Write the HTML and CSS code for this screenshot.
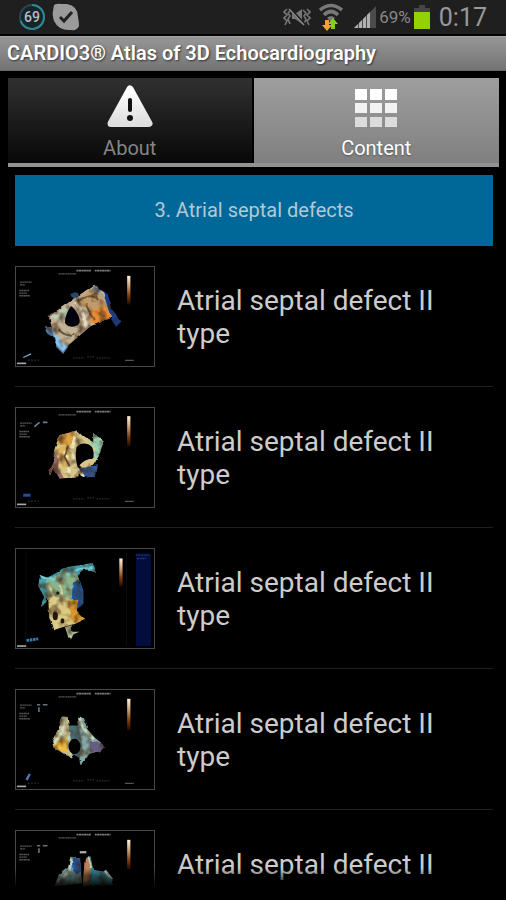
FILE: index.html
```html
<!DOCTYPE html>
<html lang="en">
<head>
<meta charset="utf-8">
<meta name="viewport" content="width=device-width, initial-scale=1">
<title>CARDIO3® Atlas of 3D Echocardiography</title>
<link rel="stylesheet" href="styles.css">
</head>
<body>
<svg class="defs" width="0" height="0" aria-hidden="true">
  <defs>
    <filter id="tissue" x="-20%" y="-20%" width="140%" height="140%" color-interpolation-filters="sRGB">
      <feTurbulence type="fractalNoise" baseFrequency="0.04" numOctaves="2" seed="4" result="n"/>
      <feDisplacementMap in="SourceGraphic" in2="n" scale="9" xChannelSelector="R" yChannelSelector="G" result="d"/>
      <feColorMatrix in="n" type="matrix" values="0 0 0 0 0.25  0 0 0 0 0.15  0 0 0 0 0.08  2 0 0 0 -0.85" result="shade"/>
      <feComposite in="shade" in2="d" operator="in" result="s"/>
      <feMerge result="m"><feMergeNode in="d"/><feMergeNode in="s"/></feMerge>
      <feGaussianBlur in="m" stdDeviation="1.5"/>
    </filter>
    <filter id="soft"><feGaussianBlur stdDeviation="1.5"/></filter>
    <linearGradient id="scale" x1="0" y1="0" x2="0" y2="1">
      <stop offset="0" stop-color="#fff4dc"/><stop offset=".35" stop-color="#c9a078"/><stop offset=".7" stop-color="#7a3c10"/><stop offset="1" stop-color="#200800"/>
    </linearGradient>
    <linearGradient id="sign" x1="0" y1="0" x2="0" y2="1">
      <stop offset="0" stop-color="#fff"/><stop offset="1" stop-color="#dedede"/>
    </linearGradient>
    <g id="captions" fill="none" stroke-width="5">
      <path d="M205 32h45M261 32h48" stroke="#777" stroke-dasharray="5 1 8 1"/>
      <path d="M150 42h54" stroke="#555" stroke-width="4" stroke-dasharray="6 1 3 1"/>
      <path d="M32 67h36M32 76h16M30 93h30M30 101h24M30 109h32" stroke="#555" stroke-width="4" stroke-dasharray="7 1 4 1"/>
      <path d="M195 299h34M238 296h22M266 299h42" stroke="#2c2c2c" stroke-width="4" stroke-dasharray="5 3"/>
      <path d="M354 307h26" stroke="#666" stroke-width="4" stroke-dasharray="5 1"/>
      <path d="M56 306h34" stroke="#353535" stroke-width="3" stroke-dasharray="6 4"/>
      <path d="M23 316h28" stroke="#aaa"/>
    </g>
  </defs>
</svg>

<div class="app">
  <header class="status">
    <div class="status-group">
      <svg class="gauge" viewBox="0 0 28 28" role="img" aria-label="69">
        <circle cx="14" cy="14" r="12" fill="#14262a" stroke="#30484c" stroke-width="2"/>
        <path d="M14 2a12 12 0 1 1-11.4 15.7" fill="none" stroke="#2f8796" stroke-width="2"/>
        <text x="14" y="19" text-anchor="middle" class="gauge-text">69</text>
      </svg>
      <svg class="skype" viewBox="0 0 28 28" aria-hidden="true">
        <path d="M2 2Q5 0 10 1L15 1Q26 3 26 14Q27 19 27 23Q25 28 19 27Q7 28 2 18Q0 11 1 8Z" fill="#9b9b9b"/>
        <path d="M8 14l4 4 8-9" fill="none" stroke="#222" stroke-width="3"/>
      </svg>
    </div>
    <div class="status-group status-right">
      <svg class="mute" viewBox="0 0 28 20" aria-hidden="true" fill="none" stroke="#777" stroke-width="1.6">
        <path d="M4 2L1 5l3 3-3 3 3 3-2 4M8 3L5 6l2 3-2 3 2 5M24 2l3 3-3 3 3 3-3 3 2 4M20 3l3 3-2 3 2 3-2 5"/>
        <path d="M9 7h3l7-5v15l-7-5H9z" fill="#777" stroke="none"/>
        <path d="M7 2l15 16" stroke="#1f1f1f" stroke-width="3"/><path d="M6 2l15 16" stroke="#888"/>
      </svg>
      <svg class="wifi" viewBox="0 0 24 28" aria-hidden="true">
        <g fill="none" stroke="#777" stroke-width="3.6">
          <path d="M1 7Q12 -2 23 7"/><path d="M5 12Q12 5 19 12"/>
        </g>
        <path d="M8 15Q12 11 16 15L12 19Z" fill="#777"/>
        <path d="M6 17h4v5h3l-5 6-5-6h3z" fill="#f5a035"/>
        <path d="M12 26v-5h-3l5-6 5 6h-3v5z" fill="#85cf17"/>
      </svg>
      <svg class="signal" viewBox="0 0 24 24" aria-hidden="true">
        <path d="M1 23L23 1v22z" fill="#4b4b4b"/>
        <path d="M1 23l4-4v4zM6 18l3-3v8H6zM10 14l3-3v12h-3zM14 10l3-3v16h-3z" fill="#b0b0b0"/>
      </svg>
      <span class="percent">69%</span>
      <svg class="battery" viewBox="0 0 18 26" aria-hidden="true">
        <path d="M6 1h6v3h5v6H1V4h5z" fill="#454545"/><path d="M1 8h16v17H1z" fill="#92d200"/>
      </svg>
      <time class="clock">0:17</time>
    </div>
  </header>
  <h1 class="title">CARDIO3® Atlas of 3D Echocardiography</h1>

  <nav class="tabs">
    <button class="tab" type="button">
      <svg class="tab-icon" viewBox="0 0 48 44" aria-hidden="true">
        <path d="M24 4L43 38.500H5Z" fill="url(#sign)" stroke="url(#sign)" stroke-width="7" stroke-linejoin="round"/>
        <path d="M24 15v10" stroke="#111" stroke-width="4" stroke-linecap="round"/><circle cx="24" cy="33" r="3" fill="#111"/>
      </svg>
      <span>About</span>
    </button>
    <button class="tab active" type="button" aria-current="page">
      <svg class="tab-icon" viewBox="0 0 48 44" aria-hidden="true">
        <path d="M3 4h12v11H3zM18 4h12v11H18zM33 4h12v11H33z" fill="#fff"/>
        <path d="M3 18h12v10H3zM18 18h12v10H18zM33 18h12v10H33z" fill="#f2f2f2"/>
        <path d="M3 32h12v10H3zM18 32h12v10H18zM33 32h12v10H33z" fill="#dcdcdc"/>
      </svg>
      <span>Content</span>
    </button>
  </nav>

  <main class="content">
    <h2 class="banner">3. Atrial septal defects</h2>
    <ul class="list">
      <li><a class="row" href="#defect-1">
        <svg class="thumb" viewBox="21 21 420 303" aria-hidden="true">
          <use href="#captions"/>
          <path d="M360 48h10v88h-10z" fill="url(#scale)"/>
          <path d="M42 298l24-11" stroke="#7aa5d8" stroke-width="4"/>
          <g filter="url(#tissue)">
            <path d="M270 84l30 20 16 50 26 34-16 16-14-22-20-40z" fill="#173f91"/>
            <path d="M112 205l24 0 44 60-16 22-24-24-6-26-24-16z" fill="#4c79a8"/>
            <path d="M186 104l22-8 10 20-24 6z" fill="#244f78"/>
            <path d="M120 172L258 76l28 20 24 80-62 26-84 72-22-26z" fill="#c4b296"/>
            <path d="M200 128l56-48 26 20 14 36-44 18-28-10z" fill="#c19b69"/>
            <path d="M244 158l50-20 16 38-46 20-18-6z" fill="#e78b34"/>
            <path d="M256 76l12 4 16 30-28-18z" fill="#7eb2d4"/>
            <path d="M124 174l54-34 12 20-34 28z" fill="#bccdb1"/>
            <path d="M130 196l44 8 34 26-44 36-24-24z" fill="#c0b295"/>
            <path d="M128 206l18 28 30 32-14 16-20-26z" fill="#8bc3ea"/>
            <path d="M202 128l24 40 10 38" fill="none" stroke="#e3dac0" stroke-width="10"/>
            <path d="M212 124q38-26 60-2M234 136l24 48M150 212q26 28 48 12" fill="none" stroke="#74583a" stroke-width="6"/>
          </g>
          <path d="M188 140q12 8 22 28 12 26-6 33-20 8-34-8-2-24 18-53z" fill="#02030a" filter="url(#soft)"/>
        </svg>
        <span>Atrial septal defect II type</span></a></li>
      <li><a class="row" href="#defect-2">
        <svg class="thumb" viewBox="21 21 420 303" aria-hidden="true">
          <use href="#captions"/>
          <path d="M360 46h10v92h-10z" fill="url(#scale)"/>
          <path d="M76 78l16-13M102 65h14" stroke="#687d98" stroke-width="5"/><path d="M42 288h22" stroke="#244ca5" stroke-width="9"/>
          <g filter="url(#tissue)">
            <path d="M222 202l48-6-6 36-42 2-12-18z" fill="#315aa0"/>
            <path d="M152 106l54-16 20 18 38 22 12 34-28 36-34 6-4 28-50 2-16-16-8-68z" fill="#d6c689"/>
            <path d="M154 104l42-10 10 18-26 28-36-6z" fill="#dea345"/>
            <path d="M144 146l34-10 12 46-24 24-18-26z" fill="#deb465"/>
            <path d="M256 100l32 20-12 42-10 18-12-8 8-28-28-20 22 2z" fill="#9bd2b2"/>
            <path d="M136 152l16 30-4 24 18 28-12 4-20-34-10 24-4-10 14-28z" fill="#976b66"/>
            <path d="M200 104l-8 44 12 52 22 30M166 154l18 30-6 36" fill="none" stroke="#efe5ae" stroke-width="9"/>
            <path d="M180 136l-12 34 16 30" fill="none" stroke="#74532b" stroke-width="5"/>
          </g>
          <path d="M205 141q14-18 38-8 18 10 14 40-10 10-24 14-8 22-24 15-10-28-4-61z" fill="#000" filter="url(#soft)"/>
          <path d="M218 200q20-22 46-18" fill="none" stroke="#d9c58a" stroke-width="12" filter="url(#soft)"/>
        </svg>
        <span>Atrial septal defect II type</span></a></li>
      <li><a class="row" href="#defect-3">
        <svg class="thumb" viewBox="21 21 420 303" aria-hidden="true">
          <path d="M387 34h46v284h-46z" fill="#020d3d"/><path d="M386 40h42M390 50h28" stroke="#25366e" stroke-width="4" stroke-dasharray="6 2"/>
          <path d="M50 28v290M358 28v290" stroke="#0c0c0c" stroke-width="3"/>
          <path d="M336 50h10v86h-10z" fill="url(#scale)"/>
          <path d="M52 301l36-5" stroke="#327bb4" stroke-width="9" stroke-dasharray="8 2"/><path d="M23 318h28" stroke="#aaa" stroke-width="5"/>
          <g filter="url(#tissue)">
            <path d="M92 108l24 0 62-32 76-12 14 30-40-12-22 20-78 20-16 66-16 10 10-30-18-34z" fill="#43a0ac"/>
            <path d="M110 118l60-28 38 6 12 40-6 54-58 26-34-36z" fill="#8bb48c"/>
            <path d="M194 124l20-10 12 34 0 40-16 16-20-28z" fill="#1d599d"/>
            <path d="M118 168l58 2 22 10 8 34 22 22-26 14-38 10-30 10-12-38z" fill="#dbc982"/>
            <path d="M178 180l32-4-4 38 22 24-26 10-14-12z" fill="#d6962f"/>
            <path d="M170 260l20-6 2 20 22 0-18 8-8 16-8-6z" fill="#b5c49b"/>
            <path d="M120 128l20 48-8 58 14 28M176 96l-22 40 12 40" fill="none" stroke="#d6cf96" stroke-width="7"/>
            <path d="M92 104l28 10 30 0 60-30 44-8" fill="none" stroke="#75cbd2" stroke-width="7"/>
          </g>
          <g fill="#24170c" filter="url(#soft)"><ellipse cx="140" cy="226" rx="8" ry="13"/><ellipse cx="162" cy="241" rx="6" ry="8"/><circle cx="148" cy="156" r="5"/></g>
        </svg>
        <span>Atrial septal defect II type</span></a></li>
      <li><a class="row" href="#defect-4">
        <svg class="thumb" viewBox="21 21 420 303" aria-hidden="true">
          <use href="#captions"/>
          <path d="M360 48h10v96h-10z" fill="url(#scale)"/>
          <path d="M84 66h10M102 66h14M90 74v14" stroke="#687080" stroke-width="5"/><path d="M52 296l10-18" stroke="#517fb8" stroke-width="7"/>
          <g filter="url(#tissue)">
            <path d="M176 130h42l22 30 24 28-28 40-20 26-2-26-16-8-28-4z" fill="#49717b"/>
            <path d="M162 102l16 2 6 50-4 38 14 36-22-8-38-24-4-20 22-40z" fill="#c4bc8c"/>
            <path d="M132 178l44-12 0 46-34-10z" fill="#f2bd3d"/>
            <path d="M210 102l14 4 14 34 24 28 26 20-12 20-32 8-26 36-4-18 8-48-8-40z" fill="#84a8a4"/>
            <path d="M244 182l22-4 30 16-22 16-26 0z" fill="#655d83"/>
            <path d="M214 104l10 32 34 36M168 106l-6 42-24 36M182 150l4 64" fill="none" stroke="#c9ddc2" stroke-width="8"/>
          </g>
          <ellipse cx="199" cy="194" rx="18" ry="24" fill="#000" filter="url(#soft)"/>
        </svg>
        <span>Atrial septal defect II type</span></a></li>
      <li><a class="row" href="#defect-5">
        <svg class="thumb" viewBox="21 21 420 303" aria-hidden="true">
          <use href="#captions"/>
          <path d="M360 48h10v90h-10z" fill="url(#scale)"/>
          <path d="M84 66h10M102 66h14M90 74v14" stroke="#687080" stroke-width="5"/><path d="M215 86h20" stroke="#aaa" stroke-width="7"/>
          <g filter="url(#tissue)">
            <path d="M186 100l28 2 8 80-84 8 12-34 30-24z" fill="#74a7a0"/>
            <path d="M192 102h24l4 44-16 8-12-16z" fill="#2056a1"/>
            <path d="M232 102l16-4 8 42 40 6 22 40-94 6z" fill="#3a8998"/>
            <path d="M230 108l12-10 8 22-6 68-20 4z" fill="#bc8254"/>
            <path d="M240 100l10 34M190 104l-8 40-34 34M292 142l22 28" fill="none" stroke="#c0cfc0" stroke-width="8"/>
          </g>
        </svg>
        <span>Atrial septal defect II</span></a></li>
    </ul>
  </main>
</div>
</body>
</html>
```
FILE: styles.css
```css
* { box-sizing: border-box; }

body {
  margin: 0;
  background: #000;
  color: #ccc;
  font-family: Roboto, "Liberation Sans", sans-serif;
}

.defs { position: absolute; }

.app {
  display: flex;
  flex-direction: column;
  height: 100vh;
  padding-bottom: 12px;
  overflow: hidden;
}

.status {
  display: flex;
  flex: none;
  align-items: center;
  justify-content: space-between;
  height: 36px;
  padding: 0 19px 0 18px;
  background: #1f1f1f;
  border-bottom: 2px solid #050505;
}

.status-group { display: flex; align-items: center; gap: 6px; }
.status-right { gap: 2px; }
.gauge, .skype { width: 28px; height: 28px; }
.gauge-text { fill: #bbb; font-size: 14px; font-weight: 500; }
.mute { width: 28px; height: 20px; margin-right: 6px; }
.wifi { width: 24px; height: 28px; margin-right: 8px; }
.signal { width: 24px; height: 24px; }
.percent { color: #888; font-size: 17px; }
.battery { width: 18px; height: 26px; }
.clock { margin-left: 6px; color: #999; font-size: 25px; }

.title {
  flex: none;
  height: 35px;
  margin: 0;
  padding: 0 7px;
  background: linear-gradient(#969696, #747474);
  border-top: 1px solid #a5a5a5;
  border-bottom: 1px solid #666;
  color: #fff;
  font-size: 20px;
  font-weight: 600;
  line-height: 33px;
  text-shadow: 1px 1px 2px #333;
  white-space: nowrap;
}

.tabs {
  display: grid;
  flex: none;
  grid-template-columns: 1fr 1fr;
  height: 89px;
  margin: 7px 7px 8px 8px;
  border-bottom: 4px solid #929292;
}

.tab {
  display: flex;
  flex-direction: column;
  align-items: center;
  gap: 7px;
  padding: 7px 0 0;
  background: linear-gradient(#303030, #080808);
  border: 0;
  border-right: 2px solid #000;
  color: #858585;
  font: 20px/24px Roboto, "Liberation Sans", sans-serif;
}

.tab.active {
  background: linear-gradient(#9e9e9e, #808080);
  border-right: 0;
  color: #fff;
  text-shadow: 0 1px 2px #555;
}

.tab-icon { width: 48px; height: 44px; }

.content {
  position: relative;
  flex: 1;
  min-height: 0;
  padding: 0 13px 0 15px;
  overflow: hidden;
}

.content::after {
  position: absolute;
  right: 0;
  bottom: 0;
  left: 0;
  height: 20px;
  background: linear-gradient(transparent, #000);
  content: "";
}

.banner {
  margin: 0;
  background: #006898;
  color: #b4c8d3;
  font-size: 20px;
  font-weight: 400;
  line-height: 71px;
  text-align: center;
}

.list { margin: 0; padding: 0; list-style: none; }

.row {
  display: flex;
  align-items: flex-start;
  gap: 22px;
  padding: 20px 0 19px;
  border-bottom: 1px solid #202020;
  color: #ccc;
  font-size: 28px;
  line-height: 33px;
  text-decoration: none;
}

.row span { max-width: 300px; padding-top: 18px; }

.thumb {
  flex: none;
  width: 140px;
  height: 101px;
  border: 1px solid #484848;
}
```
